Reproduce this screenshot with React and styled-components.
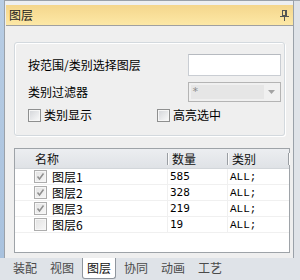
import React from "react";
import styled, { createGlobalStyle } from "styled-components";

const Global = createGlobalStyle`
  html, body { margin: 0; padding: 0; }
  body {
    font-family: "Noto Sans CJK SC", "Liberation Sans", sans-serif;
    font-size: 12px;
    color: #000;
    background: #dfe3e8;
  }
`;

const Root = styled.div`
  width: 300px;
  height: 280px;
  display: flex;
  flex-direction: column;
  background: #dfe3e8;
  overflow: hidden;
`;

const Upper = styled.div`
  flex: 1;
  min-height: 0;
  display: flex;
`;

const LeftEdge = styled.div`
  width: 4px;
  background: linear-gradient(#b8cde4, #a9c2de);
`;

const RightEdge = styled.div`
  flex: 1;
  background: #dfe3e8;
  border-top: 1px solid #a3a9b0;
`;

const Dock = styled.div`
  width: 290px;
  box-sizing: border-box;
  display: flex;
  flex-direction: column;
  border: 1px solid #9aa1a9;
  border-bottom: none;
  background: #edeff1;
  padding-top: 4px;
`;

const TitleBar = styled.div`
  height: 20px;
  margin-left: 1px;
  display: flex;
  align-items: center;
  justify-content: space-between;
  padding: 0 4px 0 3px;
  background: linear-gradient(#f4d68c, #fde8a6);
  border-bottom: 1px solid #a0a0a0;
`;

const TitleText = styled.span`
  font-size: 12px;
  line-height: 14px;
  color: #1a1a1a;
`;

const Body = styled.div`
  flex: 1;
  display: flex;
  flex-direction: column;
  background: #efefef;
  padding: 16px 3px 5px 9px;
`;

const Group = styled.div`
  height: 94px;
  box-sizing: border-box;
  margin-right: 5px;
  border: 1px solid #d3d9de;
  border-radius: 3px;
  box-shadow: inset 1px 1px 0 #ffffff, 1px 1px 0 #ffffff;
  padding: 11px 3px 13px 13px;
  display: grid;
  grid-template-columns: 1fr 93px;
  grid-template-rows: 22px 20px 13px;
  row-gap: 6px;
  align-items: center;
`;

const Label = styled.span`
  font-size: 12px;
  line-height: 14px;
  white-space: nowrap;
`;

const TextInput = styled.div`
  height: 22px;
  box-sizing: border-box;
  background: #fff;
  border: 1px solid #c9cdd3;
  border-top-color: #b6bac0;
`;

const Combo = styled.div`
  height: 20px;
  box-sizing: border-box;
  border: 1px solid #b4b4b4;
  background: #f0f0f0;
  padding: 2px;
  display: flex;
  align-items: stretch;
`;

const ComboField = styled.div`
  width: 72px;
  background: #e6e6e6;
  color: #8c8c8c;
  font-family: "DejaVu Sans Mono", monospace;
  font-size: 11px;
  line-height: 13px;
  padding-left: 1px;
`;

const ComboArrow = styled.div`
  margin-left: auto;
  margin-right: 3px;
  display: flex;
  align-items: center;
`;

const CheckRow = styled.div`
  grid-column: 1 / span 2;
  display: grid;
  grid-template-columns: 129px 1fr;
  align-items: center;
  margin-top: 1px;
`;

const CheckItem = styled.label`
  display: flex;
  align-items: center;
  gap: 3px;
`;

const Box = styled.span`
  width: 13px;
  height: 13px;
  box-sizing: border-box;
  flex: none;
  display: flex;
  align-items: center;
  justify-content: center;
  border: 1px solid ${(p) => (p.$muted ? "#adadad" : "#8e8f8f")};
  box-shadow: inset 0 0 0 1px #f6f6f6;
  background: ${(p) =>
    p.$muted
      ? "linear-gradient(135deg, #e2e2e2, #f7f7f7)"
      : "linear-gradient(135deg, #d2d4d8, #fbfbfb)"};
`;

const List = styled.div`
  margin-top: 12px;
  width: 276px;
  height: 105px;
  box-sizing: border-box;
  border: 1px solid #9ea3a8;
  background: #fff;
  display: flex;
  flex-direction: column;
`;

const Header = styled.div`
  height: 20px;
  box-sizing: border-box;
  display: flex;
  align-items: center;
  background: linear-gradient(#eceef1, #dfe2e6);
  border-bottom: 1px solid #d2d6da;
`;

const HeadCell = styled.div`
  width: ${(p) => p.$w}px;
  padding-left: ${(p) => p.$pad}px;
  box-sizing: border-box;
  font-size: 12px;
  line-height: 14px;
  color: #111;
`;

const Sep = styled.span`
  width: 1px;
  height: 12px;
  background: #9a9ea3;
  box-shadow: 1px 0 0 #fafafa;
`;

const Row = styled.div`
  height: 16px;
  box-sizing: border-box;
  display: grid;
  grid-template-columns: 153px 60px 1fr;
  border-bottom: 1px solid #f0f0f0;
`;

const Cell = styled.div`
  display: flex;
  align-items: center;
  gap: 5px;
  padding-left: ${(p) => p.$pad}px;
  border-right: ${(p) => (p.$last ? "none" : "1px solid #f0f0f0")};
  font-family: ${(p) =>
    p.$mono
      ? `"Liberation Mono", monospace`
      : p.$num
      ? `"DejaVu Sans Mono", monospace`
      : `"Noto Sans CJK SC", sans-serif`};
  font-size: ${(p) => (p.$mono ? "11px" : p.$num ? "11px" : "12px")};
  line-height: 14px;
  white-space: nowrap;
`;

const TabStrip = styled.div`
  height: 22px;
  display: flex;
  gap: 3px;
  padding-left: 8px;
  background: #dfe3e8;
`;

const Tab = styled.div`
  width: 34px;
  height: 21px;
  box-sizing: border-box;
  display: flex;
  align-items: center;
  justify-content: center;
  font-size: 12px;
  line-height: 14px;
  color: ${(p) => (p.$active ? "#111" : "#4a4a4a")};
  background: ${(p) => (p.$active ? "#ffffff" : "transparent")};
  border: 1px solid ${(p) => (p.$active ? "#8f969e" : "transparent")};
  border-top: none;
  border-radius: 0 0 3px 3px;
  padding-bottom: 1px;
`;

const Pin = () => (
  <svg width="9" height="11" viewBox="0 0 9 11">
    <rect x="2.5" y="0.5" width="4" height="5" fill="none" stroke="#555" />
    <line x1="5.5" y1="1" x2="5.5" y2="5" stroke="#555" />
    <line x1="0" y1="6.5" x2="9" y2="6.5" stroke="#555" />
    <line x1="4.5" y1="7" x2="4.5" y2="11" stroke="#555" />
  </svg>
);

const Check = () => (
  <svg width="9" height="9" viewBox="0 0 9 9">
    <polyline points="1.5,4.5 3.5,7 7.5,1.5" fill="none" stroke="#8f8f8f" strokeWidth="1.5" />
  </svg>
);

const rows = [
  { name: "图层1", count: "585", cat: "ALL;", checked: true },
  { name: "图层2", count: "328", cat: "ALL;", checked: true },
  { name: "图层3", count: "219", cat: "ALL;", checked: true },
  { name: "图层6", count: "19", cat: "ALL;", checked: false },
];

const tabs = ["装配", "视图", "图层", "协同", "动画", "工艺"];

export default function App() {
  return (
    <Root>
      <Global />
      <Upper>
        <LeftEdge />
        <Dock>
          <TitleBar>
            <TitleText>图层</TitleText>
            <Pin />
          </TitleBar>
          <Body>
            <Group>
              <Label>按范围/类别选择图层</Label>
              <TextInput />
              <Label>类别过滤器</Label>
              <Combo>
                <ComboField>*</ComboField>
                <ComboArrow>
                  <svg width="7" height="4" viewBox="0 0 7 4">
                    <polygon points="0,0 7,0 3.5,4" fill="#a3a3a3" />
                  </svg>
                </ComboArrow>
              </Combo>
              <CheckRow>
                <CheckItem>
                  <Box />
                  <Label>类别显示</Label>
                </CheckItem>
                <CheckItem>
                  <Box />
                  <Label>高亮选中</Label>
                </CheckItem>
              </CheckRow>
            </Group>
            <List>
              <Header>
                <HeadCell $w={152} $pad={20}>名称</HeadCell>
                <Sep />
                <HeadCell $w={59} $pad={4}>数量</HeadCell>
                <Sep />
                <HeadCell $w={60} $pad={4}>类别</HeadCell>
                <Sep />
              </Header>
              {rows.map((r) => (
                <Row key={r.name}>
                  <Cell $pad={19}>
                    <Box $muted>{r.checked && <Check />}</Box>
                    {r.name}
                  </Cell>
                  <Cell $pad={2} $num>{r.count}</Cell>
                  <Cell $pad={2} $mono $last>{r.cat}</Cell>
                </Row>
              ))}
            </List>
          </Body>
        </Dock>
        <RightEdge />
      </Upper>
      <TabStrip>
        {tabs.map((t) => (
          <Tab key={t} $active={t === "图层"}>{t}</Tab>
        ))}
      </TabStrip>
    </Root>
  );
}
